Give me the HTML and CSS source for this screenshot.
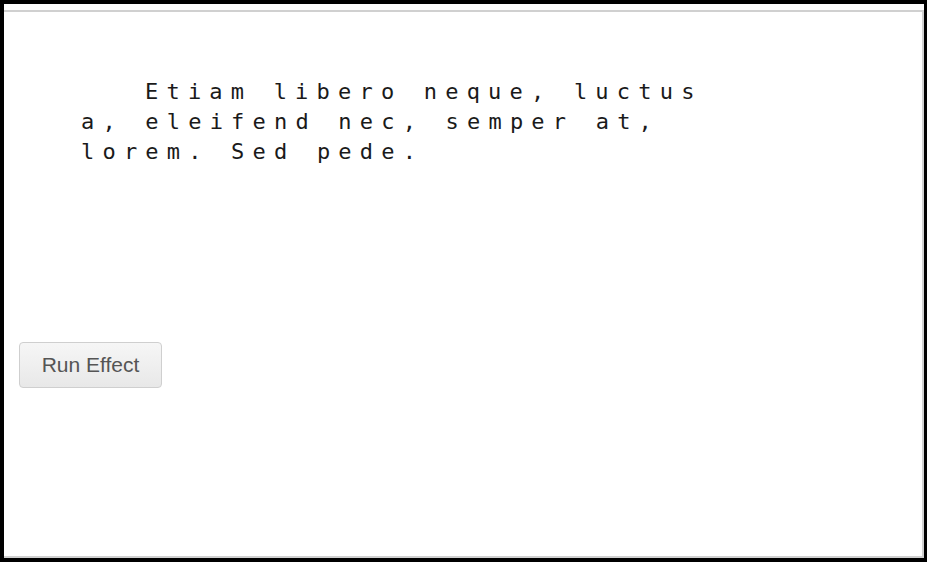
FILE: index.html
```html
<!DOCTYPE html>
<html>
<head>
<meta charset="utf-8">
<link rel="stylesheet" href="styles.css">
</head>
<body>
<div class="frame">
  <div class="pane">
    <p class="effect-text">Etiam libero neque, luctus a, eleifend nec, semper at, lorem. Sed pede.</p>
    <button class="run-btn" type="button">Run Effect</button>
  </div>
</div>
</body>
</html>
```
FILE: styles.css
```css
html, body {
  margin: 0;
  padding: 0;
  background: #fff;
}
.frame {
  width: 927px;
  height: 562px;
  box-sizing: border-box;
  border: 4px solid #000;
  border-right-width: 3px;
  padding-top: 6px;
  display: flex;
  flex-direction: column;
}
.pane {
  flex: 1;
  border: 2px solid #d0d0d0;
  border-left: none;
  padding-left: 15px;
  display: flex;
  flex-direction: column;
  align-items: flex-start;
}
.effect-text {
  margin: 65px 0 0 62px;
  width: 650px;
  font-family: "DejaVu Sans Mono", monospace;
  font-size: 22px;
  line-height: 30px;
  letter-spacing: 8.2px;
  text-indent: 64px;
  color: #1a1a1a;
}
.run-btn {
  margin-top: 175px;
  width: 143px;
  height: 46px;
  border: 1px solid #cfcfcf;
  border-radius: 4px;
  background: linear-gradient(#f6f6f6, #e8e8e8);
  font-family: "Liberation Sans", Arial, sans-serif;
  font-size: 21px;
  color: #555;
  padding: 0;
}
```
